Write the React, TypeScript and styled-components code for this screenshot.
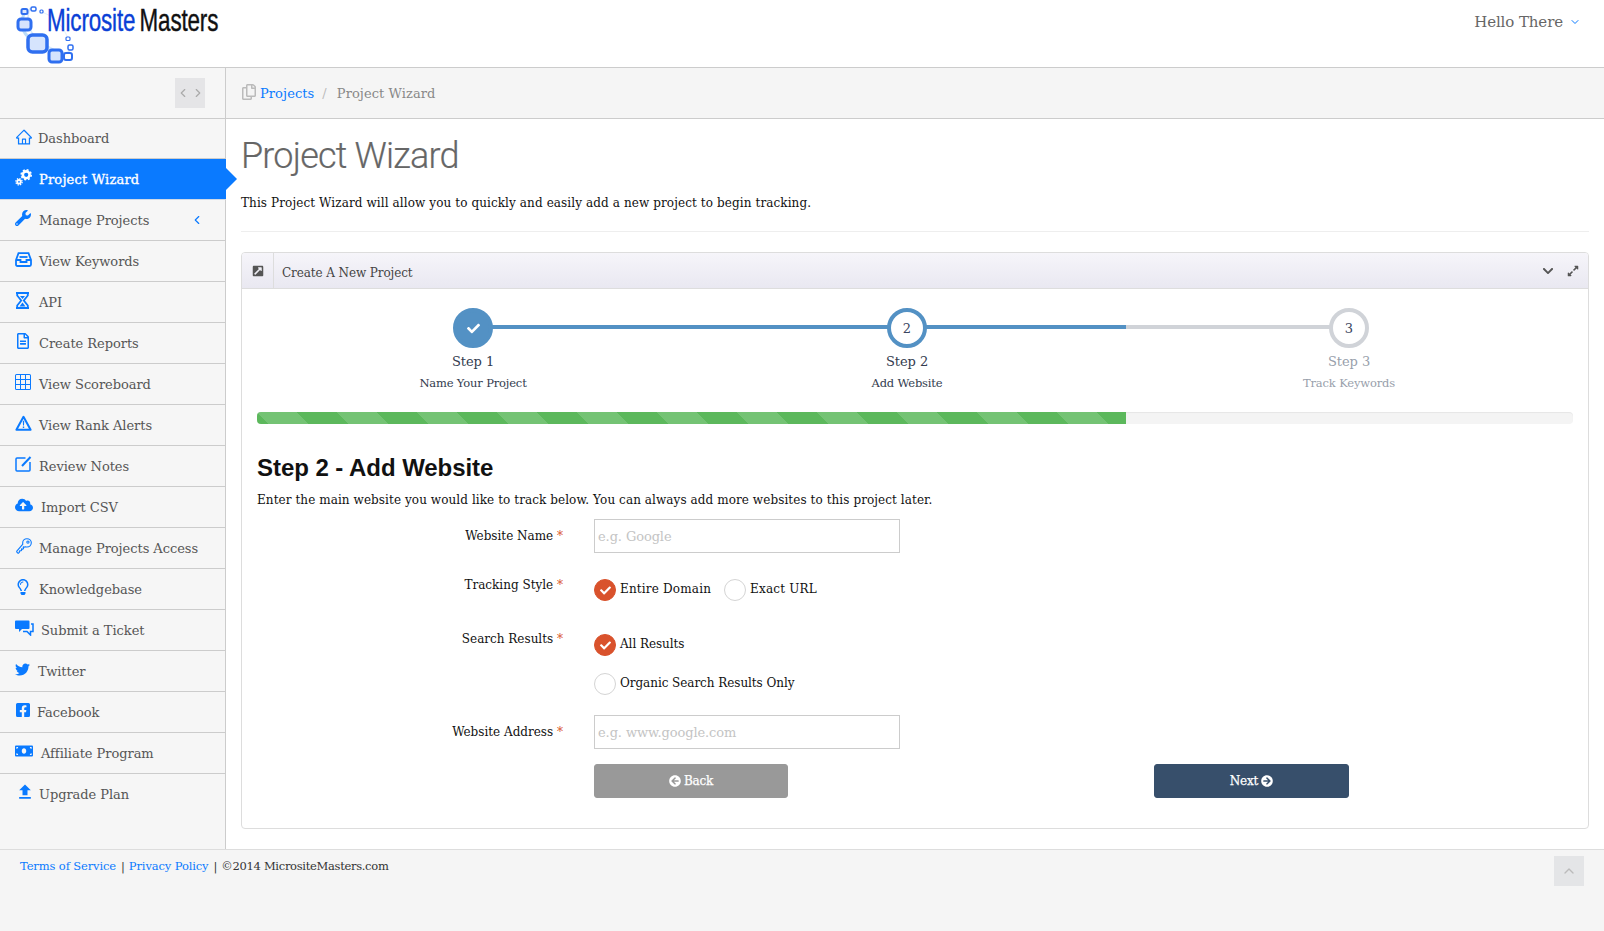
import React from "react";
import styled, { createGlobalStyle } from "styled-components";
import {
  FaWrench, FaRegFileAlt, FaCloudUploadAlt,
  FaRegLightbulb, FaTwitter, FaFacebookSquare, FaMoneyBill, FaExternalLinkSquareAlt,
  FaChevronDown, FaExpandAlt, FaCheck, FaArrowCircleLeft, FaArrowCircleRight, FaRegCopy,
} from "react-icons/fa";
import { AiOutlineHome } from "react-icons/ai";
import { BsGrid3X3 } from "react-icons/bs";
import { IoKeyOutline } from "react-icons/io5";
import { MdFileUpload } from "react-icons/md";
import { LuChevronLeft, LuChevronRight, LuChevronUp, LuChevronDown } from "react-icons/lu";

const SERIF = `"DejaVu Serif", "Liberation Serif", serif`;
const SANS = `"Liberation Sans", Arial, sans-serif`;

const Global = createGlobalStyle`
  html, body { margin: 0; padding: 0; background: #fff; }
  body { font-family: ${SERIF}; font-size: 12px; letter-spacing: 0.1px; color: #222; }
  * { box-sizing: border-box; }
`;

const Page = styled.div`
  width: 1604px;
  height: 931px;
  display: flex;
  flex-direction: column;
  overflow: hidden;
`;
const Header = styled.header`
  height: 68px;
  flex: none;
  border-bottom: 1px solid #ccc;
  display: flex;
  align-items: flex-start;
  justify-content: space-between;
  background: #fff;
`;
const Logo = styled.div`
  position: relative;
  width: 230px;
  height: 67px;
  padding: 0 0 0 47px;
`;
const LogoMark = styled.svg`
  position: absolute;
  left: 0;
  top: 0;
`;
const LogoWords = styled.div`
  display: inline-block;
  white-space: nowrap;
  font-family: ${SANS};
  font-size: 32px;
  line-height: 40px;
  letter-spacing: -0.2px;
  transform: scaleX(0.7);
  transform-origin: left top;
  -webkit-text-stroke: 0.4px currentColor;
`;
const LogoBlue = styled.span`
  color: #0a3fd6;
  margin-right: 6px;
`;
const LogoBlack = styled.span`
  color: #111;
`;
const UserMenu = styled.div`
  display: flex;
  align-items: center;
  gap: 6px;
  padding: 12px 23px 0 0;
  font-size: 15px;
  line-height: 20px;
  letter-spacing: -0.1px;
  color: #666;
  svg { color: #0a7aff; }
`;
const Middle = styled.div`
  flex: none;
  height: 781px;
  display: flex;
`;
const Sidebar = styled.aside`
  width: 226px;
  flex: none;
  background: #f6f6f6;
  border-right: 1px solid #ccc;
`;
const SideTop = styled.div`
  height: 51px;
  border-bottom: 1px solid #ccc;
  padding: 10px 0 0 175px;
`;
const Toggle = styled.div`
  width: 30px;
  height: 30px;
  background: #e5e5e7;
  display: flex;
  align-items: center;
  justify-content: center;
  gap: 1px;
  color: #aaa;
`;
const NavList = styled.nav`
  display: flex;
  flex-direction: column;
`;
const NavItem = styled.div<{ $active?: boolean; $last?: boolean }>`
  position: relative;
  height: 41px;
  padding-left: 15px;
  display: flex;
  align-items: center;
  font-size: 13px;
  letter-spacing: ${(p) => (p.$active ? "0.2px" : "-0.05px")};
  color: ${(p) => (p.$active ? "#fff" : "#555")};
  background: ${(p) => (p.$active ? "#0a7aff" : "transparent")};
  -webkit-text-stroke: ${(p) => (p.$active ? "0.35px #fff" : "0")};
  border-bottom: 1px solid ${(p) => (p.$last ? "transparent" : p.$active ? "#cfd9e6" : "#ccc")};
  margin-right: ${(p) => (p.$active ? "-1px" : "0")};
  &:first-child { height: 40px; padding-bottom: 0; }
  svg { color: ${(p) => (p.$active ? "#fff" : "#0a7aff")}; }
`;
const NavIcon = styled.span<{ $w: number }>`
  width: ${(p) => p.$w}px;
  flex: none;
  display: flex;
  align-items: center;
  margin-top: -4px;
`;
const ActiveArrow = styled.span`
  position: absolute;
  right: -11px;
  top: 9px;
  border-left: 11px solid #0a7aff;
  border-top: 11px solid transparent;
  border-bottom: 11px solid transparent;
`;
const NavCaret = styled.span`
  position: absolute;
  right: 21px;
  top: 13px;
  display: flex;
`;
const Main = styled.main`
  flex: 1;
  min-width: 0;
  display: flex;
  flex-direction: column;
`;
const Breadcrumb = styled.div`
  height: 51px;
  flex: none;
  background: #f5f5f5;
  border-bottom: 1px solid #ccc;
  padding-left: 15px;
  display: flex;
  align-items: center;
  font-size: 13px;
  letter-spacing: 0.08px;
  color: #888;
`;
const CrumbIcon = styled.span`
  display: flex;
  color: #bbb;
  margin: -3px 3px 0 0;
`;
const CrumbLink = styled.span`
  color: #0a7aff;
`;
const CrumbSep = styled.span`
  color: #bbb;
  margin: 0 10px 0 8px;
`;
const Content = styled.div`
  padding: 0 15px;
`;
const Title = styled.h1`
  margin: 0;
  padding-top: 14px;
  font-family: Roboto, ${SANS};
  font-weight: 300;
  font-size: 36px;
  line-height: 46px;
  letter-spacing: -0.8px;
  color: #666;
  -webkit-text-stroke: 0.2px #666;
`;
const Intro = styled.p`
  margin: 14px 0 0;
  font-size: 12px;
  line-height: 20px;
  color: #111;
  padding-bottom: 18px;
  border-bottom: 1px solid #eee;
`;
const Panel = styled.section`
  margin-top: 20px;
  width: 1348px;
  height: 577px;
  border: 1px solid #ddd;
  border-radius: 4px;
  overflow: hidden;
`;
const PanelHead = styled.div`
  height: 36px;
  background: linear-gradient(#f6f5fa, #e9e8f1);
  border-bottom: 1px solid #ddd;
  display: flex;
  align-items: center;
  color: #555;
`;
const PanelIcon = styled.span`
  width: 32px;
  height: 100%;
  flex: none;
  display: flex;
  align-items: center;
  justify-content: center;
  border-right: 1px solid #ddd;
`;
const PanelTitle = styled.span`
  flex: 1;
  padding: 5px 0 0 8px;
  font-size: 12px;
  letter-spacing: -0.1px;
  color: #444;
`;
const PanelTools = styled.span`
  display: flex;
  align-items: center;
  gap: 13px;
  padding-right: 9px;
`;
const PanelBody = styled.div`
  padding: 19px 15px 0;
`;
const Steps = styled.div`
  display: grid;
  grid-template-columns: 432px 436px 448px;
`;
const Step = styled.div<{ $muted?: boolean }>`
  position: relative;
  display: flex;
  flex-direction: column;
  align-items: center;
  color: ${(p) => (p.$muted ? "#98a0ab" : "#333c4e")};
  height: 104px;
`;
const Line = styled.span<{ $left: string; $width: string; $color: string }>`
  position: absolute;
  top: 17px;
  height: 4px;
  left: ${(p) => p.$left};
  width: ${(p) => p.$width};
  background: ${(p) => p.$color};
`;
const Dot = styled.span<{ $kind: "done" | "active" | "todo" }>`
  position: relative;
  width: 40px;
  height: 40px;
  border-radius: 50%;
  display: flex;
  align-items: center;
  justify-content: center;
  font-size: 13px;
  color: ${(p) => (p.$kind === "done" ? "#fff" : "#3a4560")};
  background: ${(p) => (p.$kind === "done" ? "#5391c4" : "#fff")};
  border: 4px solid ${(p) => (p.$kind === "todo" ? "#d0d3d8" : "#5391c4")};
`;
const StepName = styled.span`
  margin-top: 4px;
  font-size: 13px;
  letter-spacing: -0.05px;
  line-height: 20px;
`;
const StepSub = styled.span`
  margin-top: 2px;
  font-size: 11.5px;
  letter-spacing: -0.16px;
  line-height: 18px;
`;
const Progress = styled.div`
  height: 12px;
  background: #f4f4f4;
  border-radius: 4px;
  overflow: hidden;
  box-shadow: inset 0 1px 1px rgba(0, 0, 0, 0.06);
`;
const ProgressFill = styled.div`
  height: 100%;
  background-color: #5cb85c;
  background-image: linear-gradient(
    45deg,
    rgba(255, 255, 255, 0.15) 25%,
    transparent 25%,
    transparent 50%,
    rgba(255, 255, 255, 0.15) 50%,
    rgba(255, 255, 255, 0.15) 75%,
    transparent 75%,
    transparent
  );
  background-size: 80px 80px;
`;
const FormTitle = styled.h2`
  margin: 28px 0 0;
  font-family: ${SANS};
  font-weight: 700;
  font-size: 24px;
  line-height: 32px;
  letter-spacing: -0.05px;
  color: #111;
`;
const FormHelp = styled.p`
  margin: 6px 0 0;
  font-size: 12px;
  line-height: 20px;
  letter-spacing: 0.08px;
  color: #111;
`;
const Row = styled.div<{ $h: number; $top?: number }>`
  display: grid;
  grid-template-columns: 307px 1fr;
  column-gap: 30px;
  height: ${(p) => p.$h}px;
  margin-top: ${(p) => p.$top ?? 0}px;
`;
const RowLabel = styled.label`
  text-align: right;
  font-size: 12px;
  line-height: 20px;
  letter-spacing: 0;
  color: #111;
  padding: 7px 1px 0 0;
`;
const Star = styled.span`
  color: #d9522c;
`;
const TextInput = styled.input`
  width: 306px;
  height: 34px;
  border: 1px solid #ccc;
  background: #fff;
  padding: 0 3px;
  font-family: ${SERIF};
  font-size: 13px;
  letter-spacing: -0.1px;
  outline: none;
  &::placeholder { color: #c4c4c4; opacity: 1; }
`;
const Options = styled.div`
  display: flex;
  align-items: flex-start;
  gap: 13px;
  padding-top: 11px;
  letter-spacing: 0.18px;
`;
const OptionsColumn = styled.div`
  display: flex;
  flex-direction: column;
  gap: 17px;
  padding-top: 12px;
  letter-spacing: -0.05px;
`;
const Option = styled.div`
  display: flex;
  align-items: flex-start;
  gap: 4px;
  font-size: 12px;
  line-height: 20px;
  color: #111;
`;
const Radio = styled.span<{ $on?: boolean }>`
  width: 22px;
  height: 22px;
  border-radius: 50%;
  display: flex;
  align-items: center;
  justify-content: center;
  color: #fff;
  background: ${(p) => (p.$on ? "#d9522c" : "#fff")};
  border: 1px solid ${(p) => (p.$on ? "#d9522c" : "#d4d4d4")};
`;
const Actions = styled.div`
  display: flex;
  justify-content: space-between;
  width: 755px;
  margin-left: 337px;
  margin-top: 15px;
`;
const Button = styled.button<{ $bg: string; $w: number }>`
  width: ${(p) => p.$w}px;
  height: 34px;
  border: 1px solid ${(p) => p.$bg};
  border-radius: 3px;
  background: ${(p) => p.$bg};
  color: #fff;
  display: flex;
  align-items: center;
  justify-content: center;
  gap: 3px;
  font-family: ${SERIF};
  font-size: 12px;
  letter-spacing: -0.2px;
  -webkit-text-stroke: 0.25px #fff;
`;
const Footer = styled.footer`
  flex: 1;
  background: #f5f5f5;
  border-top: 1px solid #ddd;
  display: flex;
  justify-content: space-between;
  align-items: flex-start;
  padding: 6px 20px 0 20px;
  font-size: 11.5px;
  letter-spacing: -0.12px;
  color: #333;
`;
const FootText = styled.div`
  line-height: 20px;
`;
const FootLink = styled.span`
  color: #0a7aff;
`;
const FootSep = styled.span`
  margin: 0 4px 0 5px;
`;
const FootCopy = styled.span`
  letter-spacing: -0.3px;
`;
const ScrollTop = styled.div`
  width: 30px;
  height: 30px;
  background: #e4e5e7;
  color: #bbb;
  display: flex;
  align-items: center;
  justify-content: center;
`;

const boxes: [number, number, number, number, number, number, string][] = [
  [21.5, 9, 6, 5, 2, 1.5, "#dbe7fd"],
  [31, 7, 5, 4, 1.5, 1.5, "#fff"],
  [40, 10, 3, 3, 1.2, 1, "#fff"],
  [18, 19, 13, 11, 3, 3, "#d6e4fd"],
  [28, 35, 19, 17, 3.5, 4.5, "#d6e4fd"],
  [49, 50, 13, 12, 3, 3, "#d6e4fd"],
  [64, 53, 8, 7, 2, 2, "#fff"],
  [68, 45, 5, 5, 1.5, 1.5, "#fff"],
  [66, 37, 4, 3.5, 1.2, 1, "#fff"],
];

const LogoSvg = () => (
  <LogoMark width="80" height="66" viewBox="0 0 80 66" fill="none">
    <path d="M24 14 Q16 32 38 44 T66 56" stroke="#bcdcf8" strokeWidth="3" />
    <path d="M30 8 Q22 30 44 44 T70 50" stroke="#d6e9fb" strokeWidth="1.5" />
    <path d="M42 12 Q60 18 68 38" stroke="#e3f0fc" strokeWidth="1" />
    {boxes.map(([x, y, w, h, sw, r, fill], i) => (
      <rect key={i} x={x} y={y} width={w} height={h} rx={r} fill={fill} stroke="#2f6ff0" strokeWidth={sw} />
    ))}
  </LogoMark>
);

const GearsIcon = () => (
  <svg width="17" height="17" viewBox="0 0 17 17" fill="none" stroke="currentColor">
    <circle cx="11.2" cy="5.8" r="3.4" strokeWidth="2.6" />
    <circle cx="11.2" cy="5.8" r="5" strokeWidth="1.6" strokeDasharray="2 1.9" />
    <circle cx="4" cy="12.8" r="1.8" strokeWidth="1.8" />
    <circle cx="4" cy="12.8" r="3.2" strokeWidth="1.2" strokeDasharray="1.4 1.1" />
  </svg>
);
const InboxIcon = () => (
  <svg width="17" height="15" viewBox="0 0 17 15" fill="none" stroke="currentColor" strokeWidth="1.8">
    <path d="M1 8 L3.5 1.2 H13.5 L16 8 V12.5 Q16 14 14.5 14 H2.5 Q1 14 1 12.5 Z" />
    <path d="M1 8 H5.5 V10 H11.5 V8 H16" />
    <path d="M4.5 5 H12.5" />
  </svg>
);
const HourglassIcon = () => (
  <svg width="15" height="17" viewBox="0 0 15 17" fill="none" stroke="currentColor" strokeWidth="1.8">
    <path d="M1 1 H14 M1 16 H14" strokeWidth="2" />
    <path d="M2.2 1 V3.5 L6.2 8.5 L2.2 13.5 V16 H12.8 V13.5 L8.8 8.5 L12.8 3.5 V1 Z" />
    <path d="M4.5 14.5 L7.5 10.5 L10.5 14.5 Z M5 4 H10 L7.5 7 Z" fill="currentColor" stroke="none" />
  </svg>
);
const WarningIcon = () => (
  <svg width="17" height="16" viewBox="0 0 17 16" fill="none">
    <path d="M8.5 1.8 L15.6 14.8 H1.4 Z" stroke="currentColor" strokeWidth="2" strokeLinejoin="round" />
    <path d="M7.8 5.8 H9.2 L9 10.6 H8 Z M7.8 11.6 H9.2 V13 H7.8 Z" fill="currentColor" />
  </svg>
);
const NoteIcon = () => (
  <svg width="17" height="16" viewBox="0 0 17 16" fill="none" stroke="currentColor">
    <path d="M10.5 2 H2 Q1 2 1 3 V14 Q1 15 2 15 H14 Q15 15 15 14 V6" strokeWidth="1.5" />
    <path d="M7 10 L15.5 1" strokeWidth="2" />
  </svg>
);
const TicketIcon = () => (
  <svg width="19" height="16" viewBox="0 0 19 16" fill="none">
    <path d="M1 0.5 H13.5 Q14.5 0.5 14.5 1.5 V8 Q14.5 9 13.5 9 H7 L4 12 V9 H1 Q0 9 0 8 V1.5 Q0 0.5 1 0.5 Z" fill="currentColor" />
    <path d="M16 4 H18 V11.5 H15.5 V15 L12 11.5 H8" stroke="currentColor" strokeWidth="1.5" />
  </svg>
);

const items: { label: string; icon: React.ReactNode; w: number; active?: boolean; caret?: boolean }[] = [
  { label: "Dashboard", icon: <AiOutlineHome size={18} />, w: 23 },
  { label: "Project Wizard", icon: <GearsIcon />, w: 24, active: true },
  { label: "Manage Projects", icon: <FaWrench size={16} />, w: 24, caret: true },
  { label: "View Keywords", icon: <InboxIcon />, w: 24 },
  { label: "API", icon: <HourglassIcon />, w: 24 },
  { label: "Create Reports", icon: <FaRegFileAlt size={16} />, w: 24 },
  { label: "View Scoreboard", icon: <BsGrid3X3 size={16} />, w: 24 },
  { label: "View Rank Alerts", icon: <WarningIcon />, w: 24 },
  { label: "Review Notes", icon: <NoteIcon />, w: 24 },
  { label: "Import CSV", icon: <FaCloudUploadAlt size={18} />, w: 26 },
  { label: "Manage Projects Access", icon: <IoKeyOutline size={18} />, w: 24 },
  { label: "Knowledgebase", icon: <FaRegLightbulb size={16} />, w: 24 },
  { label: "Submit a Ticket", icon: <TicketIcon />, w: 26 },
  { label: "Twitter", icon: <FaTwitter size={15} />, w: 23 },
  { label: "Facebook", icon: <FaFacebookSquare size={16} />, w: 22 },
  { label: "Affiliate Program", icon: <FaMoneyBill size={18} />, w: 26 },
  { label: "Upgrade Plan", icon: <MdFileUpload size={20} />, w: 24 },
];

export default function App() {
  return (
    <Page>
      <Global />
      <Header>
        <Logo>
          <LogoSvg />
          <LogoWords>
            <LogoBlue>Microsite</LogoBlue>
            <LogoBlack>Masters</LogoBlack>
          </LogoWords>
        </Logo>
        <UserMenu>
          Hello There
          <LuChevronDown size={12} />
        </UserMenu>
      </Header>
      <Middle>
        <Sidebar>
          <SideTop>
            <Toggle>
              <LuChevronLeft size={14} />
              <LuChevronRight size={14} />
            </Toggle>
          </SideTop>
          <NavList>
            {items.map((it, i) => (
              <NavItem key={it.label} $active={it.active} $last={i === items.length - 1}>
                <NavIcon $w={it.w}>{it.icon}</NavIcon>
                {it.label}
                {it.active && <ActiveArrow />}
                {it.caret && (
                  <NavCaret>
                    <LuChevronLeft size={14} />
                  </NavCaret>
                )}
              </NavItem>
            ))}
          </NavList>
        </Sidebar>
        <Main>
          <Breadcrumb>
            <CrumbIcon>
              <FaRegCopy size={16} />
            </CrumbIcon>
            <CrumbLink>Projects</CrumbLink>
            <CrumbSep>/</CrumbSep>
            Project Wizard
          </Breadcrumb>
          <Content>
            <Title>Project Wizard</Title>
            <Intro>This Project Wizard will allow you to quickly and easily add a new project to begin tracking.</Intro>
            <Panel>
              <PanelHead>
                <PanelIcon>
                  <FaExternalLinkSquareAlt size={12} />
                </PanelIcon>
                <PanelTitle>Create A New Project</PanelTitle>
                <PanelTools>
                  <FaChevronDown size={12} />
                  <FaExpandAlt size={12} />
                </PanelTools>
              </PanelHead>
              <PanelBody>
                <Steps>
                  <Step>
                    <Line $left="216px" $width="216px" $color="#5391c4" />
                    <Dot $kind="done">
                      <FaCheck size={13} />
                    </Dot>
                    <StepName>Step 1</StepName>
                    <StepSub>Name Your Project</StepSub>
                  </Step>
                  <Step>
                    <Line $left="0" $width="436px" $color="#5391c4" />
                    <Dot $kind="active">2</Dot>
                    <StepName>Step 2</StepName>
                    <StepSub>Add Website</StepSub>
                  </Step>
                  <Step $muted>
                    <Line $left="0" $width="1px" $color="#5391c4" />
                    <Line $left="1px" $width="223px" $color="#d0d3d8" />
                    <Dot $kind="todo">3</Dot>
                    <StepName>Step 3</StepName>
                    <StepSub>Track Keywords</StepSub>
                  </Step>
                </Steps>
                <Progress>
                  <ProgressFill style={{ width: `${(869 / 1316) * 100}%` }} />
                </Progress>
                <FormTitle>Step 2 - Add Website</FormTitle>
                <FormHelp>Enter the main website you would like to track below. You can always add more websites to this project later.</FormHelp>
                <Row $h={49} $top={9}>
                  <RowLabel>
                    Website Name <Star>*</Star>
                  </RowLabel>
                  <TextInput placeholder="e.g. Google" />
                </Row>
                <Row $h={54}>
                  <RowLabel>
                    Tracking Style <Star>*</Star>
                  </RowLabel>
                  <Options>
                    <Option>
                      <Radio $on>
                        <FaCheck size={11} />
                      </Radio>
                      Entire Domain
                    </Option>
                    <Option>
                      <Radio />
                      Exact URL
                    </Option>
                  </Options>
                </Row>
                <Row $h={93}>
                  <RowLabel>
                    Search Results <Star>*</Star>
                  </RowLabel>
                  <OptionsColumn>
                    <Option>
                      <Radio $on>
                        <FaCheck size={11} />
                      </Radio>
                      All Results
                    </Option>
                    <Option>
                      <Radio />
                      Organic Search Results Only
                    </Option>
                  </OptionsColumn>
                </Row>
                <Row $h={34}>
                  <RowLabel>
                    Website Address <Star>*</Star>
                  </RowLabel>
                  <TextInput placeholder="e.g. www.google.com" />
                </Row>
                <Actions>
                  <Button $bg="#999" $w={194}>
                    <FaArrowCircleLeft size={12} /> Back
                  </Button>
                  <Button $bg="#374f6b" $w={195}>
                    Next <FaArrowCircleRight size={12} />
                  </Button>
                </Actions>
              </PanelBody>
            </Panel>
          </Content>
        </Main>
      </Middle>
      <Footer>
        <FootText>
          <FootLink>Terms of Service</FootLink>
          <FootSep>|</FootSep>
          <FootLink>Privacy Policy</FootLink>
          <FootSep>|</FootSep>
          <FootCopy>©2014 MicrositeMasters.com</FootCopy>
        </FootText>
        <ScrollTop>
          <LuChevronUp size={16} />
        </ScrollTop>
      </Footer>
    </Page>
  );
}
